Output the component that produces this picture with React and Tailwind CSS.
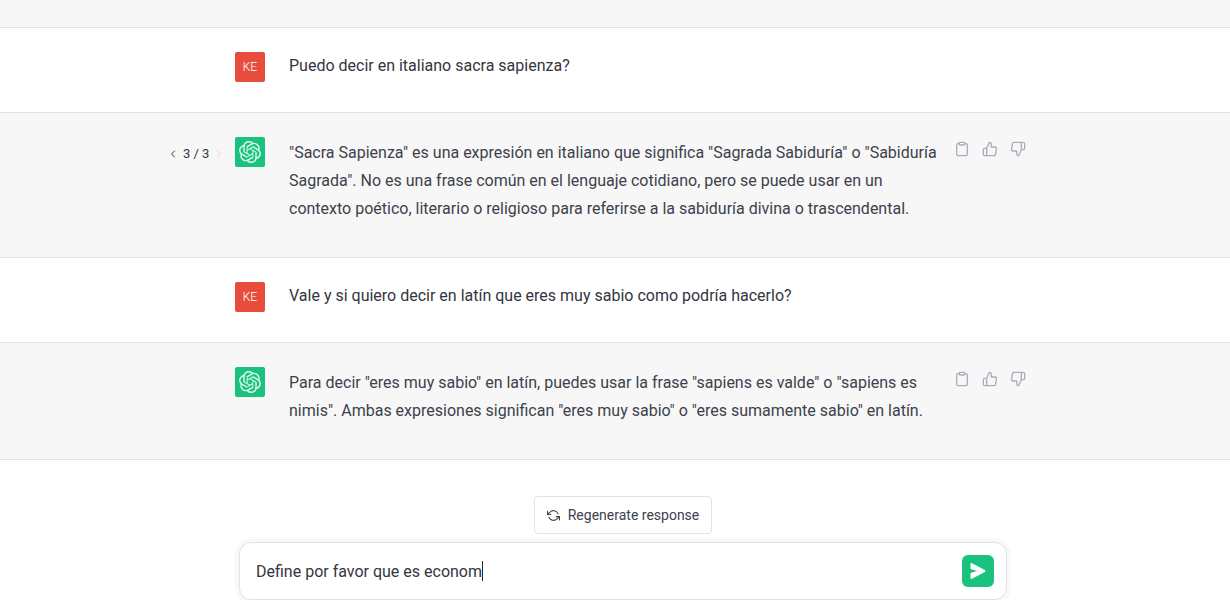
import { useState } from "react";
import { FiClipboard, FiThumbsUp, FiThumbsDown, FiRefreshCcw, FiChevronLeft, FiChevronRight } from "react-icons/fi";
import { SiOpenai } from "react-icons/si";

function Pager() {
  return (
    <nav aria-label="Response versions" className="flex h-8 items-center gap-1 pt-px text-[#343541]">
      <button type="button" aria-label="Previous response" className="w-2">
        <FiChevronLeft size={12} strokeWidth={2} className="-ml-1" />
      </button>
      <span className="text-[13px]">3 / 3</span>
      <button type="button" aria-label="Next response" disabled className="text-gray-300">
        <FiChevronRight size={12} strokeWidth={2} />
      </button>
    </nav>
  );
}

function Actions() {
  return (
    <div className="flex gap-3 pt-1 text-[#acacbe]">
      <button type="button" aria-label="Copy" className="size-4"><FiClipboard size={16} strokeWidth={2} /></button>
      <button type="button" aria-label="Good response" className="size-4"><FiThumbsUp size={16} strokeWidth={2} /></button>
      <button type="button" aria-label="Bad response" className="size-4"><FiThumbsDown size={16} strokeWidth={2} /></button>
    </div>
  );
}

function Row({ children, className }) {
  return (
    <section className={"border-b border-[#e2e2e4] pl-4 " + className}>
      <div className="mx-auto grid max-w-[904px] grid-cols-[64px_30px_649px_72px]">{children}</div>
    </section>
  );
}

function UserMessage({ children }) {
  return (
    <Row className="bg-white pt-6 pb-[30px]">
      <div />
      <div className="grid size-[30px] place-items-center rounded-xs bg-[#e84c3d] text-xs font-light text-white">KE</div>
      <p className="pt-0.5 pl-6 leading-6 text-[#343541] whitespace-nowrap">{children}</p>
    </Row>
  );
}

function BotMessage({ lines, pager }) {
  return (
    <Row className="bg-[#f7f7f8] pt-6 pb-[34px]">
      <div>{pager && <Pager />}</div>
      <div className="grid size-[30px] place-items-center rounded-xs bg-[#19c37d] text-white/85">
        <SiOpenai size={22} />
      </div>
      <p className="pt-0.5 pl-6 leading-7 text-[#3d414b] whitespace-nowrap">
        {lines.map((line) => <span key={line} className="block">{line}</span>)}
      </p>
      <div className="pl-10"><Actions /></div>
    </Row>
  );
}

export default function App() {
  const [draft, setDraft] = useState("Define por favor que es econom");
  return (
    <main className="min-h-screen overflow-hidden bg-white font-['Roboto',sans-serif] text-base">
      <div className="h-7 border-b border-[#e2e2e4] bg-[#f7f7f8]" />
      <UserMessage>Puedo decir en italiano sacra sapienza?</UserMessage>
      <BotMessage
        pager
        lines={[
          '"Sacra Sapienza" es una expresión en italiano que significa "Sagrada Sabiduría" o "Sabiduría',
          'Sagrada". No es una frase común en el lenguaje cotidiano, pero se puede usar en un',
          "contexto poético, literario o religioso para referirse a la sabiduría divina o trascendental.",
        ]}
      />
      <UserMessage>Vale y si quiero decir en latín que eres muy sabio como podría hacerlo?</UserMessage>
      <BotMessage
        lines={[
          'Para decir "eres muy sabio" en latín, puedes usar la frase "sapiens es valde" o "sapiens es',
          'nimis". Ambas expresiones significan "eres muy sabio" o "eres sumamente sabio" en latín.',
        ]}
      />
      <div className="flex flex-col items-center gap-2 pt-9 pl-4">
        <button type="button" className="flex h-[38px] items-center gap-2 rounded border border-[#e2e2e4] bg-white px-3 text-sm text-[#40414f]">
          <FiRefreshCcw size={13} strokeWidth={2} />
          Regenerate response
        </button>
        <form
          onSubmit={(e) => e.preventDefault()}
          className="flex h-[58px] w-full max-w-3xl items-center rounded-xl border border-[#e2e2e4] bg-white pr-3 pl-4 shadow-[0_0_0_4px_#f9f9fa]"
        >
          <input
            aria-label="Message"
            value={draft}
            onChange={(e) => setDraft(e.target.value)}
            className="field-sizing-content pt-0.5 text-[#343541] outline-none"
          />
          <span className="h-5 w-px bg-gray-800" />
          <button type="submit" aria-label="Send message" className="ml-auto grid size-8 place-items-center rounded-md bg-[#19c37d] text-white">
            <svg viewBox="0 0 16 16" className="size-4" fill="currentColor" aria-hidden="true">
              <path d="M.5 1.163A1 1 0 0 1 1.97.28l12.868 6.837a1 1 0 0 1 0 1.766L1.969 15.72A1 1 0 0 1 .5 14.836V10.8a1 1 0 0 1 .7-.95L7 8 1.2 6.15A1 1 0 0 1 .5 5.2V1.163Z" />
            </svg>
          </button>
        </form>
      </div>
    </main>
  );
}
